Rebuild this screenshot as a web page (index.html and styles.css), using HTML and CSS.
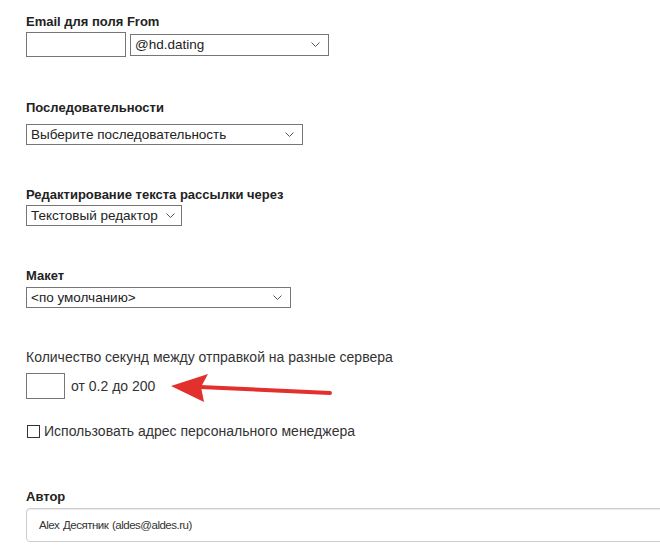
FILE: index.html
```html
<!DOCTYPE html>
<html lang="ru">
<head>
    <meta charset="UTF-8">
    <title>Настройки рассылки</title>
    <link rel="stylesheet" href="styles.css">
</head>
<body>

<form class="settings">
    <div class="field field-email">
        <label class="label">Email для поля From</label>
        <div class="row">
            <input type="text" class="input input-email">
            <div class="select select-domain">
                <span>@hd.dating</span>
                <svg class="chevron" width="9" height="5" viewBox="0 0 9 5"><path d="M0.5 0.5 L4.5 4.5 L8.5 0.5" fill="none" stroke="#555" stroke-width="1"/></svg>
            </div>
        </div>
    </div>

    <div class="field field-seq">
        <label class="label">Последовательности</label>
        <div class="select select-seq">
            <span>Выберите последовательность</span>
            <svg class="chevron" width="9" height="5" viewBox="0 0 9 5"><path d="M0.5 0.5 L4.5 4.5 L8.5 0.5" fill="none" stroke="#555" stroke-width="1"/></svg>
        </div>
    </div>

    <div class="field field-editor">
        <label class="label">Редактирование текста рассылки через</label>
        <div class="select select-editor">
            <span>Текстовый редактор</span>
            <svg class="chevron" width="9" height="5" viewBox="0 0 9 5"><path d="M0.5 0.5 L4.5 4.5 L8.5 0.5" fill="none" stroke="#555" stroke-width="1"/></svg>
        </div>
    </div>

    <div class="field field-layout">
        <label class="label">Макет</label>
        <div class="select select-layout">
            <span>&lt;по умолчанию&gt;</span>
            <svg class="chevron" width="9" height="5" viewBox="0 0 9 5"><path d="M0.5 0.5 L4.5 4.5 L8.5 0.5" fill="none" stroke="#555" stroke-width="1"/></svg>
        </div>
    </div>

    <div class="field field-delay">
        <div class="text">Количество секунд между отправкой на разные сервера</div>
        <div class="row row-delay">
            <input type="text" class="input input-delay">
            <span class="text">от 0.2 до 200</span>
        </div>
    </div>

    <label class="check">
        <span class="box"></span>
        <span>Использовать адрес персонального менеджера</span>
    </label>

    <div class="field field-author">
        <label class="label">Автор</label>
        <div class="author">Alex Десятник (aldes@aldes.ru)</div>
    </div>

    <!-- стрелка-пометка поверх формы -->
    <svg class="arrow" width="180" height="34" viewBox="0 0 180 34">
        <path d="M160 19 L30 13" stroke="#e2302d" stroke-width="4" stroke-linecap="round" fill="none"/>
        <path d="M1 12 L38 0 L31 13 L34 28 Z" fill="#e2302d"/>
    </svg>
</form>

</body>
</html>
```

FILE: styles.css
```css
body {
    margin: 0;
    font-family: "Liberation Sans", Arial, sans-serif;
    font-size: 14px;
    color: #333;
    background: #fff;
}
.settings {
    position: relative;
    padding: 14px 0 0 26px;
}
.label {
    display: block;
    font-size: 13px;
    font-weight: bold;
    color: #222;
    line-height: 16px;
}
.text {
    line-height: 16px;
}
.row {
    display: flex;
    align-items: center;
    gap: 4px;
}
.input {
    box-sizing: border-box;
    border: 1px solid #767676;
    margin: 0;
    padding: 0;
    background: #fff;
}
.select {
    box-sizing: border-box;
    display: flex;
    justify-content: space-between;
    align-items: center;
    height: 21px;
    padding: 0 8px 0 4px;
    border: 1px solid #767676;
    color: #222;
    font-size: 13.5px;
    white-space: nowrap;
}
.chevron {
    flex: none;
    margin-left: 4px;
}

.field-email .row {
    margin-top: 2px;
}
.input-email {
    width: 100px;
    height: 25px;
}
.select-domain {
    width: 199px;
    height: 22px;
}

.field-seq {
    margin-top: 43px;
}
.select-seq {
    width: 277px;
    margin-top: 8px;
}

.field-editor {
    margin-top: 42px;
}
.select-editor {
    width: 156px;
    margin-top: 2px;
    padding-right: 6px;
}

.field-layout {
    margin-top: 42px;
}
.select-layout {
    width: 265px;
    margin-top: 3px;
}

.field-delay {
    margin-top: 41px;
}
.row-delay {
    margin-top: 8px;
    gap: 6px;
}
.input-delay {
    width: 39px;
    height: 26px;
}

.check {
    display: flex;
    align-items: center;
    gap: 4px;
    margin-top: 24px;
    line-height: 16px;
    color: #333;
}
.box {
    box-sizing: border-box;
    width: 13px;
    height: 13px;
    margin-left: 1px;
    border: 1px solid #333;
    background: #fff;
}

.field-author {
    margin-top: 50px;
}
.author {
    box-sizing: border-box;
    width: 660px;
    height: 34px;
    margin-top: 3px;
    padding: 0 12px;
    display: flex;
    align-items: center;
    border: 1px solid #ccc;
    border-radius: 4px;
    box-shadow: inset 0 1px 1px rgba(0, 0, 0, 0.075);
    font-size: 11.5px;
    letter-spacing: -0.5px;
    word-spacing: 1px;
    color: #333;
}

.arrow {
    position: absolute;
    left: 170px;
    top: 374px;
}
```
